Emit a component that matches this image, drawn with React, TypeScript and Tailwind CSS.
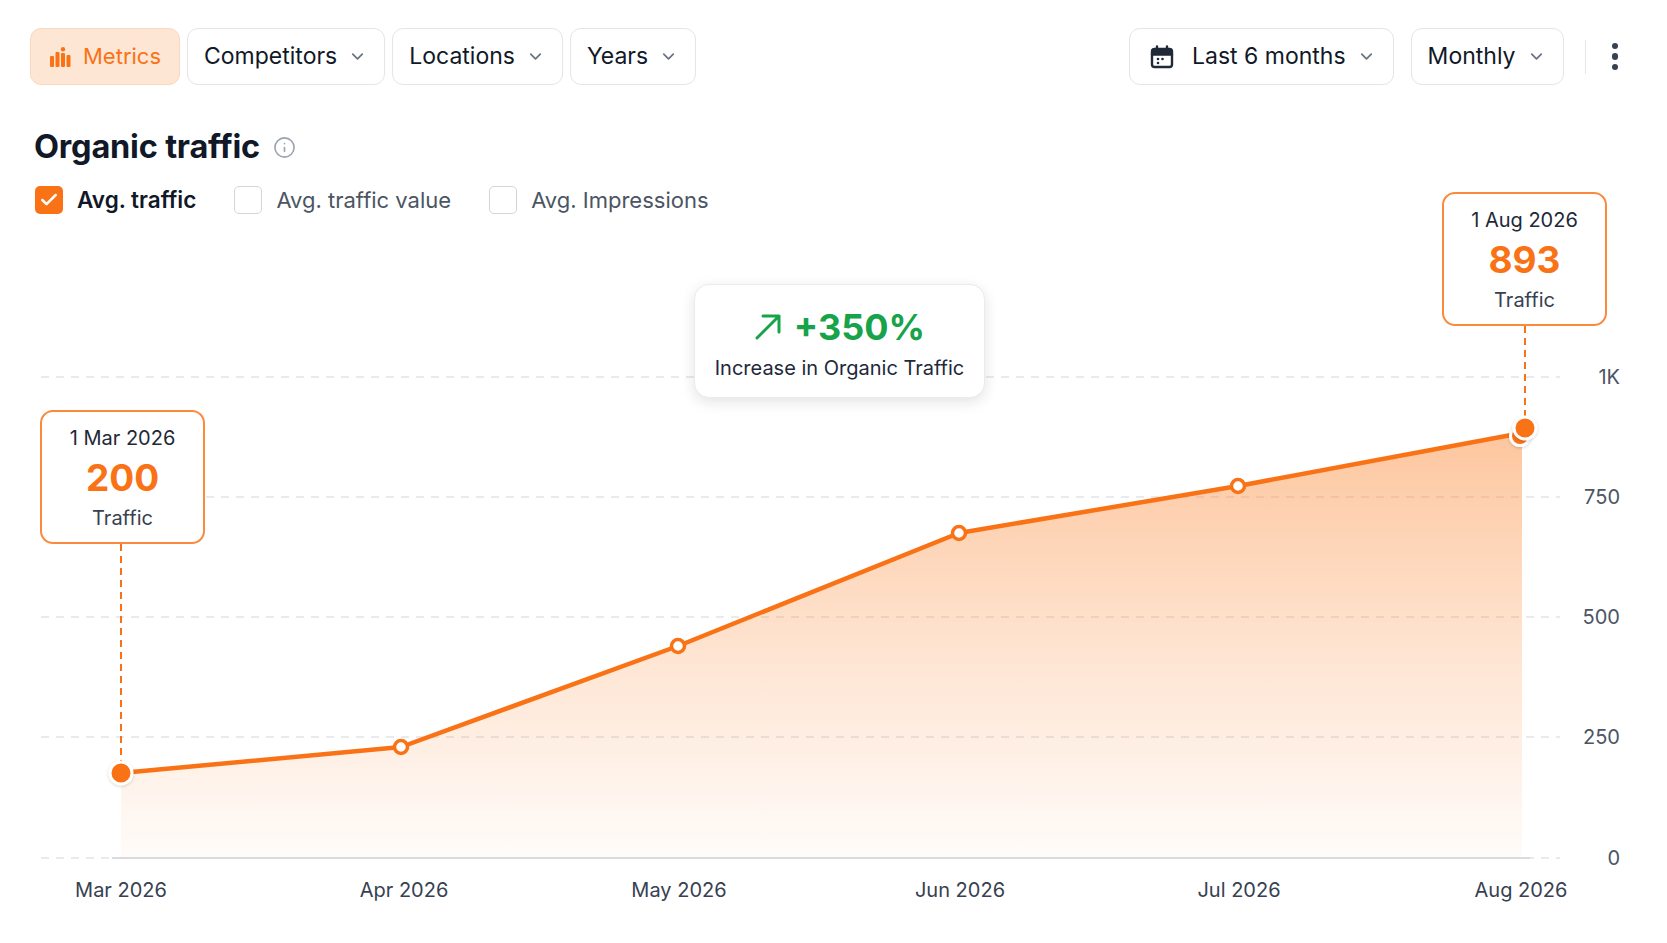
import React from "react";
import { ChevronDown, Info, Check } from "lucide-react";

const pts: [number, number][] = [
  [121, 773],
  [401, 747],
  [678, 646],
  [959, 533],
  [1238, 486],
  [1522, 433],
];

const grid = [
  { y: 377, label: "1K" },
  { y: 497, label: "750" },
  { y: 617, label: "500" },
  { y: 737, label: "250" },
  { y: 858, label: "0" },
];

const xLabels: [number, string][] = [
  [121, "Mar 2026"],
  [404, "Apr 2026"],
  [679, "May 2026"],
  [960, "Jun 2026"],
  [1239, "Jul 2026"],
  [1521, "Aug 2026"],
];

function MetricsIcon() {
  return (
    <svg width="21" height="20" viewBox="0 0 21 20" fill="#f97316">
      <rect x="0" y="9" width="4" height="11" rx="1" />
      <rect x="5.5" y="5" width="4" height="15" rx="1" />
      <circle cx="13" cy="2.2" r="2.2" />
      <rect x="11" y="6" width="4" height="14" rx="1" />
      <rect x="16.5" y="8" width="4" height="12" rx="1" />
    </svg>
  );
}

function CalendarIcon() {
  return (
    <svg width="26" height="26" viewBox="0 0 26 26" fill="none" stroke="#1f2937" strokeWidth="2.4" strokeLinecap="round" strokeLinejoin="round">
      <rect x="3" y="5" width="20" height="18" rx="2.5" />
      <path d="M8 2.5v5M18 2.5v5M3 10.5h20" />
      <rect x="3" y="5" width="20" height="5.5" fill="#1f2937" stroke="none" rx="2" />
      <circle cx="9" cy="15" r="1.3" fill="#1f2937" stroke="none" />
      <circle cx="13.5" cy="15" r="1.3" fill="#1f2937" stroke="none" />
      <circle cx="9" cy="19" r="1.3" fill="#1f2937" stroke="none" />
    </svg>
  );
}

function Dropdown({ label, icon }: { label: string; icon?: React.ReactNode }) {
  return (
    <button
      className={
        "flex h-[57px] items-center rounded-[11px] border-[1.5px] border-[#e3e5e9] bg-white pr-[17px] text-[23px] text-[#111827] " +
        (icon ? "pl-[19px]" : "pl-[16px]")
      }
    >
      {icon ? <span className="mr-[17px] flex">{icon}</span> : null}
      <span>{label}</span>
      <span className="ml-[11px] flex">
        <ChevronDown size={19} color="#6b7280" strokeWidth={2.2} />
      </span>
    </button>
  );
}

function Tip({ date, value, cls }: { date: string; value: string; cls: string }) {
  return (
    <div className={"absolute flex h-[134px] w-[165px] flex-col items-center rounded-[13px] border-2 border-[#fb8a3c] bg-white pt-[12px] " + cls}>
      <div className="text-[20px] leading-[28px] text-[#1f2937]">{date}</div>
      <div className="mt-[6px] text-[37px] font-bold leading-[40px] text-[#f97316]">{value}</div>
      <div className="mt-[6px] text-[20px] leading-[28px] text-[#374151]">Traffic</div>
    </div>
  );
}

export default function App() {
  const linePath = pts.map((p, i) => (i === 0 ? "M" : "L") + p[0] + " " + p[1]).join(" ");
  const areaPath = linePath + ` L${pts[5][0]} 858 L${pts[0][0]} 858 Z`;

  return (
    <div className="h-[943px] w-full overflow-hidden bg-white" style={{ fontFamily: "Inter, 'Noto Sans', sans-serif" }}>
      <div className="pl-[30px] pr-[40px] pt-[28px]">
        <div className="flex items-center justify-between">
          <div className="flex items-center gap-[7px]">
            <button className="flex h-[57px] items-center gap-[12px] rounded-[11px] border-[1.5px] border-[#fcd7bb] bg-[#fee6d4] pl-[19px] pr-[18px] text-[22px] text-[#f97316]">
              <MetricsIcon />
              <span>Metrics</span>
            </button>
            <Dropdown label="Competitors" />
            <Dropdown label="Locations" />
            <Dropdown label="Years" />
          </div>
          <div className="flex items-center">
            <Dropdown label="Last 6 months" icon={<CalendarIcon />} />
            <div className="ml-[17px]">
              <Dropdown label="Monthly" />
            </div>
            <div className="ml-[21px] h-[34px] w-[1.5px] bg-[#e5e7eb]" />
            <div className="ml-[17px] flex h-[30px] w-[24px] flex-col items-center justify-center gap-[4px]">
              <span className="h-[6.5px] w-[6.5px] rounded-full bg-[#374151]" />
              <span className="h-[6.5px] w-[6.5px] rounded-full bg-[#374151]" />
              <span className="h-[6.5px] w-[6.5px] rounded-full bg-[#374151]" />
            </div>
          </div>
        </div>

        <div className="mt-[43px] flex items-center gap-[13px] pl-[4px]">
          <h1 className="text-[32.5px] font-bold leading-[38px] tracking-[-0.2px] text-[#111827]">Organic traffic</h1>
          <Info size={23} color="#9ca3af" strokeWidth={1.7} />
        </div>

        <div className="mt-[20px] flex items-center gap-[38px] pl-[5px]">
          <div className="flex items-center gap-[14px]">
            <span className="flex h-[28px] w-[28px] items-center justify-center rounded-[5px] bg-[#f97316]">
              <Check size={20} color="#ffffff" strokeWidth={3} />
            </span>
            <span className="text-[22.5px] font-semibold leading-[28px] text-[#111827]">Avg. traffic</span>
          </div>
          <div className="flex items-center gap-[14px]">
            <span className="h-[28px] w-[28px] rounded-[5px] border-[1.5px] border-[#d1d5db] bg-white" />
            <span className="text-[22px] leading-[28px] text-[#4b5563]">Avg. traffic value</span>
          </div>
          <div className="flex items-center gap-[14px]">
            <span className="h-[28px] w-[28px] rounded-[5px] border-[1.5px] border-[#d1d5db] bg-white" />
            <span className="text-[22px] leading-[28px] text-[#4b5563]">Avg. Impressions</span>
          </div>
        </div>
      </div>

      <div className="relative h-[729px] w-[1667px]">
        <svg width="1667" height="729" viewBox="0 214 1667 729" className="block">
          <defs>
            <linearGradient id="fillG" x1="0" y1="428" x2="0" y2="858" gradientUnits="userSpaceOnUse">
              <stop offset="0" stopColor="#fb8c3c" stopOpacity="0.5" />
              <stop offset="0.55" stopColor="#fb8c3c" stopOpacity="0.22" />
              <stop offset="1" stopColor="#fb8c3c" stopOpacity="0.03" />
            </linearGradient>
            <filter id="sh" x="-50%" y="-50%" width="200%" height="200%">
              <feDropShadow dx="0" dy="1" stdDeviation="1.5" floodColor="#000" floodOpacity="0.18" />
            </filter>
          </defs>
          {grid.map((g) => (
            <g key={g.label}>
              <line x1="41" x2="1560" y1={g.y} y2={g.y} stroke="#e2e4e8" strokeWidth="1.5" strokeDasharray="8 7" />
              <text x="1620" y={g.y + 2} textAnchor="end" dominantBaseline="middle" fontSize="20" fill="#4b5563">
                {g.label}
              </text>
            </g>
          ))}
          <line x1="112" x2="1530" y1="858" y2="858" stroke="#d9dbe0" strokeWidth="2" />
          <path d={areaPath} fill="url(#fillG)" />
          <line x1="121" x2="121" y1="544" y2="762" stroke="#f97316" strokeWidth="2" strokeDasharray="7 5" />
          <line x1="1525" x2="1525" y1="326" y2="418" stroke="#f97316" strokeWidth="2" strokeDasharray="7 5" />
          <path d={linePath} fill="none" stroke="#f97316" strokeWidth="4.5" strokeLinejoin="round" strokeLinecap="round" />
          {pts.slice(1, 5).map((p, i) => (
            <circle key={i} cx={p[0]} cy={p[1]} r="6.5" fill="#ffffff" stroke="#f97316" strokeWidth="3.5" />
          ))}
          <circle cx="121" cy="773" r="11" fill="#f97316" stroke="#ffffff" strokeWidth="3" filter="url(#sh)" />
          <circle cx="1520" cy="436" r="9.5" fill="#f97316" stroke="#ffffff" strokeWidth="3" filter="url(#sh)" />
          <circle cx="1525" cy="428" r="11" fill="#f97316" stroke="#ffffff" strokeWidth="3" filter="url(#sh)" />
          {xLabels.map(([x, l]) => (
            <text key={l} x={x} y="892" textAnchor="middle" dominantBaseline="middle" fontSize="20" fill="#374151">
              {l}
            </text>
          ))}
        </svg>

        <Tip date="1 Mar 2026" value="200" cls="left-[40px] top-[196px]" />
        <Tip date="1 Aug 2026" value="893" cls="left-[1442px] top-[-22px]" />

        <div className="absolute left-[694px] top-[70px] flex h-[114px] w-[291px] flex-col items-center rounded-[15px] border border-[#e9ebef] bg-white pt-[22px] shadow-[0_4px_14px_rgba(15,23,42,0.12)]">
          <div className="flex items-center gap-[12px]">
            <svg width="28" height="28" viewBox="0 0 28 28" fill="none" stroke="#16a34a" strokeWidth="3" strokeLinecap="round" strokeLinejoin="round">
              <path d="M3 25L25 3M9 3h16v16" />
            </svg>
            <span className="text-[36px] font-bold leading-[40px] text-[#16a34a]">+350%</span>
          </div>
          <div className="mt-[7px] text-[20px] leading-[28px] text-[#1e293b]">Increase in Organic Traffic</div>
        </div>
      </div>
    </div>
  );
}
